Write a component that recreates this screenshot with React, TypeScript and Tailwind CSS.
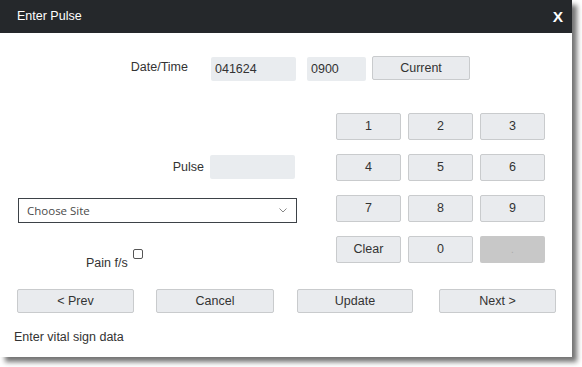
import React from "react";

const btn =
  "flex items-center justify-center bg-[#e9ebee] border border-[#c9cbcd] rounded-[2px] text-[#333] text-[12.5px] leading-none";

export default function App() {
  const keys = ["1", "2", "3", "4", "5", "6", "7", "8", "9", "Clear", "0"];
  return (
    <div className="w-[582px] h-[367px] bg-white" style={{ fontFamily: '"Liberation Sans", Arial, sans-serif' }}>
      <div className="w-[572px] h-[357px] bg-white flex flex-col shadow-[5px_5px_5px_rgba(0,0,0,0.55)]">
        {/* Header */}
        <div className="h-[33px] bg-[#25282b] flex items-center justify-between pl-[17px] pr-[9px] shrink-0">
          <span className="text-white text-[12.5px] leading-none">Enter Pulse</span>
          <span className="text-white text-[15.5px] leading-none font-bold">X</span>
        </div>

        {/* Date/Time row */}
        <div className="flex items-start mt-[23px] h-[25px]">
          <div className="ml-[108px] w-[80px] text-right text-[12.5px] text-[#333] leading-[22px]">Date/Time</div>
          <div className="ml-[23px] mt-[1px] w-[85px] h-[24px] bg-[#e9ecef] rounded-[2px] flex items-center pl-[4px] text-[12.5px] text-[#333]">
            041624
          </div>
          <div className="ml-[11px] mt-[1px] w-[59px] h-[24px] bg-[#e9ecef] rounded-[2px] flex items-center pl-[4px] text-[12.5px] text-[#333]">
            0900
          </div>
          <div className={`${btn} ml-[6px] w-[98px] h-[24px]`}>Current</div>
        </div>

        {/* Middle */}
        <div className="flex items-start mt-[32px] h-[150px]">
          <div className="w-[336px] flex flex-col">
            <div className="flex items-center mt-[42px] h-[24px]">
              <div className="w-[204px] text-right text-[12.5px] text-[#333]">Pulse</div>
              <div className="ml-[6px] w-[85px] h-[24px] bg-[#e9ecef] rounded-[2px]" />
            </div>
            <div
              className="ml-[18px] mt-[19px] w-[279px] h-[25px] border border-[#3d4247] flex items-center justify-between pl-[8px] pr-[8px]"
              style={{ fontFamily: '"Open Sans", "Noto Sans", sans-serif' }}
            >
              <span className="text-[11.5px] text-[#4a4a4a]">Choose Site</span>
              <svg width="8" height="5" viewBox="0 0 8 5" className="mr-[1px]">
                <path d="M0.5 0.5 L4 4 L7.5 0.5" fill="none" stroke="#888" strokeWidth="1" />
              </svg>
            </div>
            <div className="flex items-start mt-[26px] ml-[86px] h-[14px]">
              <span className="mt-[7px] text-[12.5px] leading-[15px] text-[#333]">Pain f/s</span>
              <span className="ml-[5px] w-[10px] h-[10px] border border-[#555] rounded-[2px] bg-white" />
            </div>
          </div>
          <div className="grid grid-cols-[65px_65px_65px] auto-rows-[27px] content-start gap-x-[7px] gap-y-[14px]">
            {keys.map((k) => (
              <div key={k} className={`${btn} h-[27px]`}>
                {k}
              </div>
            ))}
            <div className="flex items-center justify-center h-[27px] bg-[#c8c8c8] rounded-[2px] text-[#aaa] text-[10px]">
              .
            </div>
          </div>
        </div>

        {/* Bottom buttons */}
        <div className="flex mt-[26px]">
          <div className={`${btn} ml-[17px] w-[117px] h-[24px]`}>&lt; Prev</div>
          <div className={`${btn} ml-[22px] w-[118px] h-[24px]`}>Cancel</div>
          <div className={`${btn} ml-[23px] w-[116px] h-[24px]`}>Update</div>
          <div className={`${btn} ml-[26px] w-[117px] h-[24px]`}>Next &gt;</div>
        </div>

        <div className="mt-[17px] ml-[14px] text-[12.5px] leading-[15px] text-[#333]">Enter vital sign data</div>
      </div>
    </div>
  );
}
